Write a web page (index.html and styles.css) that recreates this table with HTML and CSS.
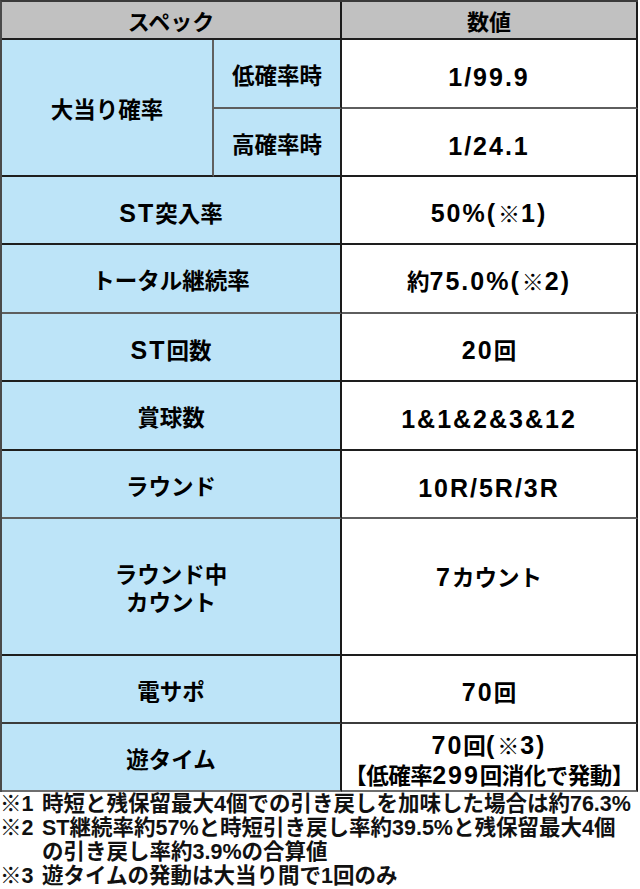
FILE: index.html
```html
<!DOCTYPE html>
<html lang="ja">
<head>
<meta charset="utf-8">
<title>スペック</title>
<link rel="stylesheet" href="styles.css">
</head>
<body>
<div class="spec">
  <div class="c head c12 b-dark">スペック</div>
  <div class="c head c3 b-dark">数値</div>

  <div class="c lab c1 r2 b-dark v-gray">大当り確率</div>
  <div class="c lab c2 b-gray">低確率時</div>
  <div class="c val c3 b-gray"><span class="lt">1/99.9</span></div>
  <div class="c lab c2 b-dark">高確率時</div>
  <div class="c val c3 b-dark"><span class="lt">1/24.1</span></div>

  <div class="c lab c12 b-dark"><span><span class="lt">ST</span>突入率</span></div>
  <div class="c val c3 b-dark"><span><span class="lt">50%(</span><span class="kome">※</span><span class="lt">1)</span></span></div>

  <div class="c lab c12 b-gray">トータル継続率</div>
  <div class="c val c3 b-gray"><span>約<span class="lt">75.0%(</span><span class="kome">※</span><span class="lt">2)</span></span></div>

  <div class="c lab c12 b-dark"><span><span class="lt">ST</span>回数</span></div>
  <div class="c val c3 b-dark"><span><span class="lt">20</span>回</span></div>

  <div class="c lab c12 b-dark">賞球数</div>
  <div class="c val c3 b-dark"><span class="lt">1&amp;1&amp;2&amp;3&amp;12</span></div>

  <div class="c lab c12 b-gray">ラウンド</div>
  <div class="c val c3 b-gray"><span class="lt">10R/5R/3R</span></div>

  <div class="c lab c12 b-dark"><span>ラウンド中</span><span>カウント</span></div>
  <div class="c val c3 b-dark top-line"><span><span class="lt">7</span>カウント</span></div>

  <div class="c lab c12 b-mid">電サポ</div>
  <div class="c val c3 b-mid"><span><span class="lt">70</span>回</span></div>

  <div class="c lab c12 b-light">遊タイム</div>
  <div class="c val c3 b-light"><span><span class="lt">70</span>回<span class="lt">(</span><span class="kome">※</span><span class="lt">3)</span></span><span class="tight">【低確率<span class="lt">299</span>回消化で発動】</span></div>
</div>

<div class="notes">
  <div class="note"><span class="mk">※1</span><span class="tx">時短と残保留最大4個での引き戻しを加味した場合は約76.3%</span></div>
  <div class="note"><span class="mk">※2</span><span class="tx">ST継続率約57%と時短引き戻し率約39.5%と残保留最大4個<br>の引き戻し率約3.9%の合算値</span></div>
  <div class="note"><span class="mk">※3</span><span class="tx">遊タイムの発動は大当り間で1回のみ</span></div>
</div>
</body>
</html>
```
FILE: styles.css
```css
html, body {
  margin: 0;
  padding: 0;
  background: #ffffff;
}

body {
  width: 640px;
  font-family: "Noto Sans CJK JP", "Noto Sans", sans-serif;
  color: #000;
}

.spec {
  display: grid;
  width: 638px;
  box-sizing: border-box;
  grid-template-columns: 212px 128px 296px;
  grid-template-rows: 38px 69px 68px 68px 69px 68px 69px 68px 137px 68px 68px;
  border-top: 2px solid #3a3a3a;
  border-left: 2px solid #4a4a4a;
}

.c {
  box-sizing: border-box;
  display: flex;
  flex-direction: column;
  align-items: center;
  justify-content: center;
  text-align: center;
  font-family: "Liberation Sans", "Noto Sans CJK JP", sans-serif;
  font-weight: 700;
  font-size: 22.5px;
  line-height: 28px;
  border-right: 2px solid #1a1a1a;
  border-bottom: 2px solid #1a1a1a;
  white-space: nowrap;
}

.head {
  background: #c1c1c1;
  font-size: 22px;
  padding-top: 5px;
}

.lab {
  background: #bde4f8;
  padding-top: 7px;
}

.val {
  background: #ffffff;
  padding-top: 7px;
}

.c12 { grid-column: 1 / 3; }
.c1 { grid-column: 1 / 2; }
.c2 { grid-column: 2 / 3; }
.c3 { grid-column: 3 / 4; }
.r2 { grid-row: span 2; }

.b-dark { border-bottom-color: #1e1e1e; }
.b-gray { border-bottom-color: #5e5e5e; }
.b-mid { border-bottom-color: #3c3c3c; }
.b-light { border-bottom-color: #6e6e6e; }
.v-gray { border-right-color: #606060; }
.c2 { border-right-color: #1e1e1e; }

.top-line {
  padding-bottom: 24px;
}

.lt {
  font-family: "Liberation Sans", Arial, sans-serif;
  font-size: 25px;
  letter-spacing: 2px;
}

.kome {
  font-family: "Noto Sans CJK JP", sans-serif;
  font-weight: 400;
  font-size: 22px;
  line-height: 1;
  margin: 0 1px;
}

.tight {
  letter-spacing: -0.5px;
}

.notes {
  width: 640px;
  font-family: "Liberation Sans", "Noto Sans CJK JP", sans-serif;
  font-size: 21.5px;
  line-height: 24px;
  font-weight: 700;
  color: #111;
}

.note {
  display: grid;
  grid-template-columns: 42px 1fr;
}

.mk {
  white-space: nowrap;
}

.tx {
  width: 596px;
}
```
